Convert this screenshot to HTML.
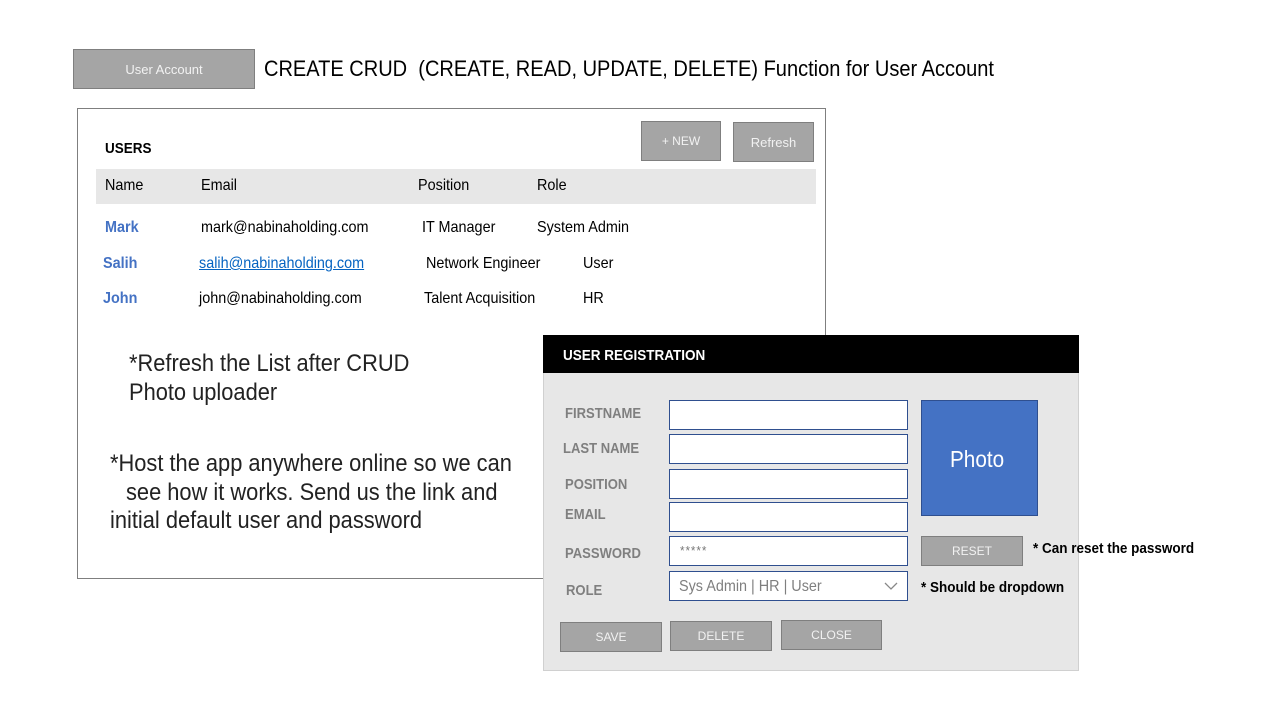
<!DOCTYPE html>
<html><head><meta charset="utf-8"><style>
body{margin:0;width:1280px;height:720px;background:#fff;position:relative;overflow:hidden;font-family:"Liberation Sans",sans-serif;}
.t{position:absolute;white-space:nowrap;line-height:1;transform:scaleX(0.9);transform-origin:left center;}
.b{position:absolute;box-sizing:border-box;}
.btn{position:absolute;box-sizing:border-box;background:#a5a5a5;border:1px solid #7f7f7f;color:#f2f2f2;font-size:12px;display:flex;align-items:center;justify-content:center;}
.lbl{position:absolute;color:#7f7f7f;font-weight:bold;font-size:15px;line-height:1;white-space:nowrap;transform:scaleX(0.87);transform-origin:left center;}
.in{position:absolute;box-sizing:border-box;background:#fff;border:1.5px solid #2f4f8f;left:669px;width:239px;height:30px;}
</style></head><body>
<div class="btn" style="left:73px;top:49px;width:182px;height:40px;font-size:13px;">User Account</div>
<div class="t" style="left:264px;top:58px;font-size:22.5px;color:#000;transform:scaleX(0.89);">CREATE CRUD&nbsp; (CREATE, READ, UPDATE, DELETE) Function for User Account</div>

<div class="b" style="left:77px;top:108px;width:749px;height:471px;border:1px solid #7f7f7f;"></div>
<div class="t" style="left:105px;top:141px;font-size:15px;font-weight:bold;">USERS</div>
<div class="btn" style="left:641px;top:121px;width:80px;height:40px;">+ NEW</div>
<div class="btn" style="left:733px;top:122px;width:81px;height:40px;font-size:13px;">Refresh</div>
<div class="b" style="left:96px;top:169px;width:720px;height:35px;background:#e7e7e7;"></div>
<div class="t" style="left:105px;top:178px;font-size:16px;">Name</div>
<div class="t" style="left:201px;top:178px;font-size:16px;">Email</div>
<div class="t" style="left:418px;top:178px;font-size:16px;">Position</div>
<div class="t" style="left:537px;top:178px;font-size:16px;">Role</div>

<div class="t" style="left:105px;top:220px;font-size:16px;font-weight:bold;color:#4472c4;">Mark</div>
<div class="t" style="left:201px;top:220px;font-size:16px;">mark@nabinaholding.com</div>
<div class="t" style="left:422px;top:220px;font-size:16px;">IT Manager</div>
<div class="t" style="left:537px;top:220px;font-size:16px;">System Admin</div>
<div class="t" style="left:103px;top:256px;font-size:16px;font-weight:bold;color:#4472c4;">Salih</div>
<div class="t" style="left:199px;top:256px;font-size:16px;color:#0563c1;text-decoration:underline;">salih@nabinaholding.com</div>
<div class="t" style="left:426px;top:256px;font-size:16px;">Network Engineer</div>
<div class="t" style="left:583px;top:256px;font-size:16px;">User</div>
<div class="t" style="left:103px;top:291px;font-size:16px;font-weight:bold;color:#4472c4;">John</div>
<div class="t" style="left:199px;top:291px;font-size:16px;">john@nabinaholding.com</div>
<div class="t" style="left:424px;top:291px;font-size:16px;">Talent Acquisition</div>
<div class="t" style="left:583px;top:291px;font-size:16px;">HR</div>

<div class="t" style="left:129px;top:352px;font-size:24px;color:#222;transform:scaleX(0.91);">*Refresh the List after CRUD</div>
<div class="t" style="left:129px;top:381px;font-size:24px;color:#222;transform:scaleX(0.91);">Photo uploader</div>
<div class="t" style="left:110px;top:452px;font-size:24px;color:#222;transform:scaleX(0.91);">*Host the app anywhere online so we can</div>
<div class="t" style="left:126px;top:481px;font-size:24px;color:#222;transform:scaleX(0.91);">see how it works. Send us the link and</div>
<div class="t" style="left:110px;top:509px;font-size:24px;color:#222;transform:scaleX(0.91);">initial default user and password</div>

<div class="b" style="left:543px;top:335px;width:536px;height:336px;background:#e7e7e7;border:1px solid #d0d0d0;"></div>
<div class="b" style="left:543px;top:335px;width:536px;height:38px;background:#000;"></div>
<div class="t" style="left:563px;top:348px;font-size:15px;font-weight:bold;color:#fff;">USER REGISTRATION</div>

<div class="lbl" style="left:565px;top:406px;">FIRSTNAME</div>
<div class="lbl" style="left:563px;top:441px;">LAST NAME</div>
<div class="lbl" style="left:565px;top:477px;">POSITION</div>
<div class="lbl" style="left:565px;top:507px;">EMAIL</div>
<div class="lbl" style="left:565px;top:546px;">PASSWORD</div>
<div class="lbl" style="left:566px;top:583px;">ROLE</div>

<div class="in" style="top:400px;"></div>
<div class="in" style="top:434px;"></div>
<div class="in" style="top:469px;"></div>
<div class="in" style="top:502px;"></div>
<div class="in" style="top:536px;"></div>
<div class="t" style="left:680px;top:544px;font-size:13px;color:#777;letter-spacing:1px;">*****</div>
<div class="in" style="top:571px;"></div>
<div class="t" style="left:679px;top:579px;font-size:16px;color:#7f7f7f;">Sys Admin | HR | User</div>
<svg style="position:absolute;left:884px;top:581px" width="14" height="10"><path d="M1 2 L7 8 L13 2" fill="none" stroke="#888" stroke-width="1.3"/></svg>

<div class="b" style="left:921px;top:400px;width:117px;height:116px;background:#4472c4;border:1.5px solid #2f4f8f;"></div>
<div class="t" style="left:950px;top:448px;font-size:23px;color:#fff;">Photo</div>
<div class="btn" style="left:921px;top:536px;width:102px;height:30px;">RESET</div>
<div class="t" style="left:1033px;top:542px;font-size:14.5px;font-weight:bold;transform:scaleX(0.93);">* Can reset the password</div>
<div class="t" style="left:921px;top:581px;font-size:14.5px;font-weight:bold;transform:scaleX(0.93);">* Should be dropdown</div>

<div class="btn" style="left:560px;top:622px;width:102px;height:30px;">SAVE</div>
<div class="btn" style="left:670px;top:621px;width:102px;height:30px;">DELETE</div>
<div class="btn" style="left:781px;top:620px;width:101px;height:30px;">CLOSE</div>
</body></html>
